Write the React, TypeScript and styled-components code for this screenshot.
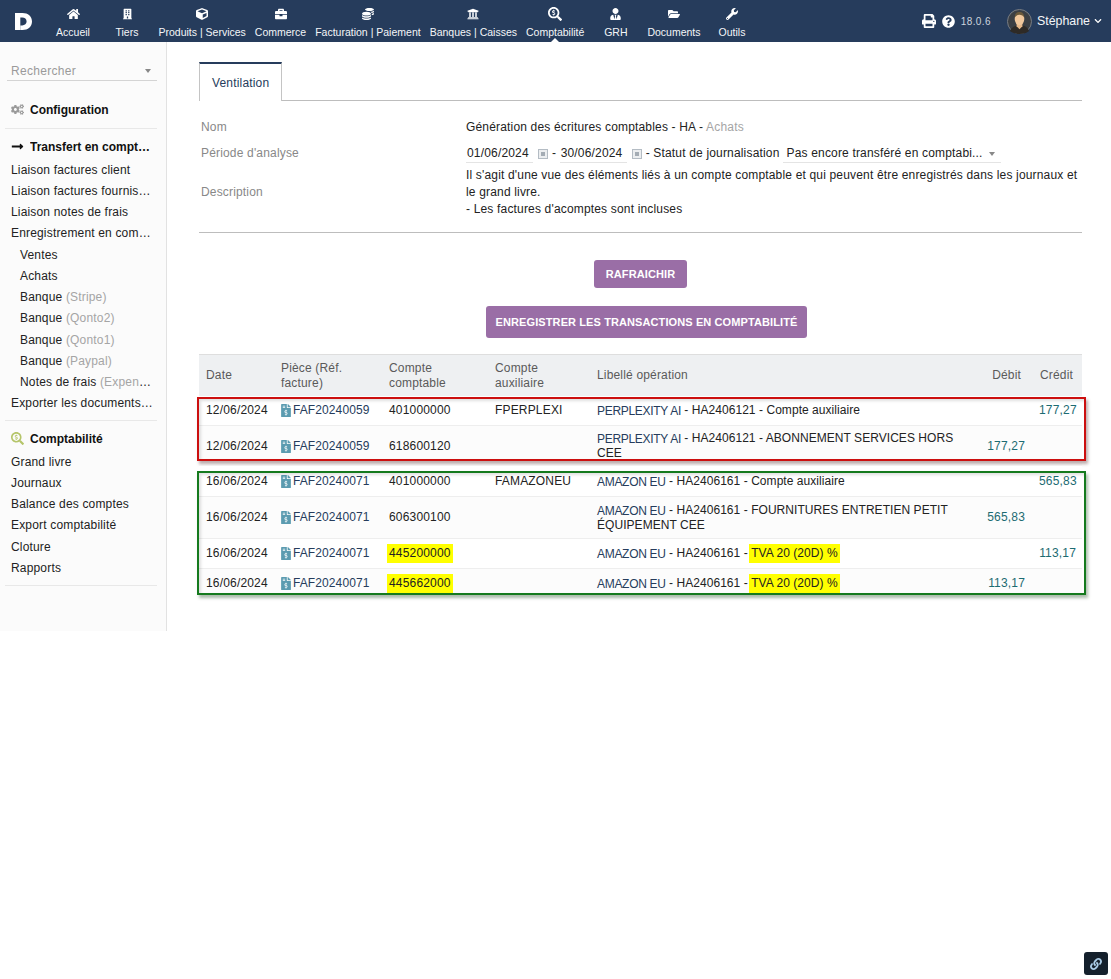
import React from 'react'
import styled, { createGlobalStyle } from 'styled-components'
import {
  FaBriefcase,
  FaBuilding,
  FaChevronDown,
  FaCoins,
  FaCogs,
  FaCube,
  FaFileInvoiceDollar,
  FaFolderOpen,
  FaHome,
  FaLink,
  FaLongArrowAltRight,
  FaPrint,
  FaQuestionCircle,
  FaSearchDollar,
  FaUniversity,
  FaUserTie,
  FaWrench,
} from 'react-icons/fa'

const NAVY = '#263c5c'
const COLUMNS = '75px 108px 106px 102px 1fr 52px 50px'

const GlobalStyle = createGlobalStyle`
  html, body {
    margin: 0;
    padding: 0;
    background: #fff;
    color: #222;
    font-family: "Liberation Sans", Arial, sans-serif;
    font-size: 12px;
    letter-spacing: 0.17px;
  }
`

const Page = styled.div`
  width: 1111px;
  min-height: 979px;
  display: flex;
  flex-direction: column;
`

const TopBar = styled.header`
  height: 42px;
  background: ${NAVY};
  display: flex;
  align-items: stretch;
  color: #f4f6f8;
  letter-spacing: 0;
`

const Logo = styled.svg`
  width: 17px;
  height: 17px;
  margin: 13px 14px 0 15px;
`

const Nav = styled.nav`
  display: flex;
  flex: 1;
`

const NavItem = styled.a<{ $active?: boolean }>`
  position: relative;
  min-width: 54px;
  box-sizing: border-box;
  padding: 0 4.5px;
  display: flex;
  flex-direction: column;
  align-items: center;
  font-size: 10.5px;
  line-height: 13px;
  white-space: nowrap;
  &::after {
    content: '';
    display: ${p => (p.$active ? 'block' : 'none')};
    position: absolute;
    left: 50%;
    bottom: 0;
    margin-left: -4px;
    border: 4px solid transparent;
    border-top: 0;
    border-bottom-color: #fff;
  }
`

const NavIcon = styled.span<{ $w: number; $h: number }>`
  height: 24px;
  padding-top: 2px;
  display: flex;
  align-items: center;
  svg {
    width: ${p => p.$w}px;
    height: ${p => p.$h}px;
    color: #fff;
  }
`

const Tools = styled.div`
  display: flex;
  align-items: center;
  padding-right: 9px;
  svg {
    color: #fff;
  }
`

const ToolIcon = styled.span<{ $size: number }>`
  display: flex;
  margin-right: 6px;
  svg {
    width: ${p => p.$size}px;
    height: ${p => p.$size}px;
  }
`

const Version = styled.span`
  font-size: 10px;
  letter-spacing: 0.4px;
  color: #cdd4de;
  margin-right: 16px;
`

const Avatar = styled.svg`
  width: 25px;
  height: 25px;
  margin-right: 5px;
`

const UserName = styled.span`
  font-size: 12.4px;
  margin-right: 4px;
`

const Layout = styled.div`
  display: flex;
  align-items: flex-start;
`

const Sidebar = styled.aside`
  width: 167px;
  height: 589px;
  box-sizing: border-box;
  flex: none;
  background: #fbfbfb;
  border-right: 1px solid #e2e2e2;
  padding: 19px 9px 0 5px;
`

const SearchSelect = styled.div`
  height: 19px;
  margin: 0 0 11px 2px;
  padding: 0 6px 0 4px;
  display: flex;
  align-items: center;
  justify-content: space-between;
  color: #9a9a9a;
  border-bottom: 1px solid #d4d4d4;
  letter-spacing: 0.3px;
`

const Caret = styled.span`
  width: 0;
  height: 0;
  border: 3.5px solid transparent;
  border-bottom: 0;
  border-top: 4px solid #888;
`

const MenuBlock = styled.div`
  border-bottom: 1px solid #e8e8e8;
  padding: 7px 0 5.5px;
`

const MenuTitle = styled.div`
  height: 21px;
  margin-bottom: 2.5px;
  padding-right: 6px;
  display: flex;
  align-items: center;
  font-weight: 700;
  color: #111;
  letter-spacing: 0;
  span {
    overflow: hidden;
    text-overflow: ellipsis;
    white-space: nowrap;
  }
`

const TitleIcon = styled.i<{ $color: string }>`
  flex: none;
  width: 25px;
  padding-left: 6px;
  box-sizing: border-box;
  display: flex;
  color: ${p => p.$color};
  svg {
    width: 13px;
    height: 13px;
  }
`

const MenuLink = styled.div<{ $sub?: boolean }>`
  height: 21.25px;
  line-height: 21px;
  padding: 0 1px 0 ${p => (p.$sub ? 15 : 6)}px;
  color: #222;
  overflow: hidden;
  white-space: nowrap;
  text-overflow: ellipsis;
`

const Muted = styled.span`
  color: #a5a5a5;
`

const Main = styled.main`
  flex: 1;
  min-width: 0;
  padding: 20px 29px 0 32px;
`

const TabBar = styled.div`
  height: 38px;
  border-bottom: 1px solid #bdbdbd;
  display: flex;
`

const Tab = styled.div`
  box-sizing: border-box;
  height: 39px;
  padding: 12px 12px 0 12px;
  border: 1px solid #c4c4c4;
  border-top: 2px solid ${NAVY};
  border-bottom: 0;
  background: #fff;
  color: ${NAVY};
`

const Info = styled.section`
  display: grid;
  grid-template-columns: 265px 1fr;
  padding: 18px 0 14px 2px;
  border-bottom: 1px solid #bdbdbd;
  margin-bottom: 27px;
  line-height: 17px;
`

const Label = styled.div<{ $gap?: number }>`
  display: flex;
  align-items: center;
  color: #888;
  padding-top: ${p => p.$gap ?? 0}px;
`

const Value = styled.div`
  color: #222;
`

const PeriodValue = styled.div`
  display: flex;
  align-items: center;
  height: 27px;
  padding-top: 4px;
  white-space: pre;
`

const DateField = styled.span`
  width: 67px;
  box-sizing: border-box;
  padding-left: 1px;
  border-bottom: 1px solid #e4e4e4;
`

const CalendarIcon = styled.svg`
  width: 10px;
  height: 10px;
  margin: 0 4px 0 5px;
`

const StatusSelect = styled.span`
  width: 218px;
  box-sizing: border-box;
  margin-left: 3px;
  padding: 1px 6px 0 4px;
  display: flex;
  align-items: center;
  justify-content: space-between;
  border-bottom: 1px solid #e4e4e4;
`

const Actions = styled.div`
  display: flex;
  flex-direction: column;
  align-items: center;
  gap: 18px;
  margin-bottom: 16px;
`

const Button = styled.button<{ $tall?: boolean }>`
  height: ${p => (p.$tall ? 32 : 28)}px;
  padding: 0 ${p => (p.$tall ? 10 : 11.5)}px;
  margin-left: ${p => (p.$tall ? 12 : 0)}px;
  border: 0;
  border-radius: 3px;
  background: #9a6ea6;
  color: #fff;
  font: 700 11px "Liberation Sans", Arial, sans-serif;
  letter-spacing: 0.1px;
`

const HeaderRow = styled.div`
  display: grid;
  grid-template-columns: ${COLUMNS};
  height: 42px;
  box-sizing: border-box;
  align-items: center;
  background: #eef0f2;
  border-top: 1px solid #dedede;
  color: #5a5a5a;
  line-height: 15px;
`

const HeaderCell = styled.div<{ $right?: number }>`
  padding: 0 ${p => p.$right ?? 7}px 0 7px;
  text-align: ${p => (p.$right ? 'right' : 'left')};
`

const Frame = styled.div<{ $color: string; $top: number; $bottom: number; $shadow: string }>`
  position: relative;
  &::after {
    content: '';
    position: absolute;
    left: -2px;
    right: -4px;
    top: ${p => p.$top}px;
    bottom: ${p => p.$bottom}px;
    border: 2px solid ${p => p.$color};
    box-shadow: 2px 3px 3px ${p => p.$shadow}, inset 2px 2px 3px rgba(0, 0, 0, 0.12);
    pointer-events: none;
  }
`

const Row = styled.div<{ $height: number; $even?: boolean }>`
  display: grid;
  grid-template-columns: ${COLUMNS};
  height: ${p => p.$height}px;
  box-sizing: border-box;
  align-items: center;
  background: ${p => (p.$even ? '#fcfcfc' : '#fff')};
  border-bottom: 1px solid #eeeeee;
  line-height: 15px;
  &:last-child {
    border-bottom: 0;
  }
`

const Cell = styled.div<{ $right?: number }>`
  padding: 0 ${p => p.$right ?? 7}px 0 7px;
  text-align: ${p => (p.$right ? 'right' : 'left')};
`

const WordingCell = styled(Cell)`
  letter-spacing: 0.05px;
`

const RefLink = styled.span`
  display: flex;
  align-items: center;
  color: ${NAVY};
  letter-spacing: 0.1px;
  svg {
    flex: none;
    width: 10px;
    height: 13px;
    margin-right: 2px;
    color: #5b9bb0;
  }
`

const Party = styled.span`
  position: relative;
  top: 1px;
  color: ${NAVY};
  letter-spacing: -0.3px;
`

const Amount = styled.span`
  color: #1c6b72;
`

const Marked = styled.mark`
  background: #ffff00;
  color: #222;
  padding: 2px 2px 3px;
  margin: 0 -2px;
`

const CornerButton = styled.div`
  position: fixed;
  right: 3px;
  bottom: 4px;
  width: 24px;
  height: 23px;
  border-radius: 3px;
  background: #14202c;
  color: #a9cbe6;
  display: flex;
  align-items: center;
  justify-content: center;
  svg {
    width: 12px;
    height: 12px;
  }
`

const NAV_ITEMS = [
  { label: 'Accueil', Icon: FaHome, w: 13, h: 12 },
  { label: 'Tiers', Icon: FaBuilding, w: 9, h: 12 },
  { label: 'Produits | Services', Icon: FaCube, w: 12, h: 12 },
  { label: 'Commerce', Icon: FaBriefcase, w: 12, h: 12 },
  { label: 'Facturation | Paiement', Icon: FaCoins, w: 12, h: 12 },
  { label: 'Banques | Caisses', Icon: FaUniversity, w: 12, h: 12 },
  { label: 'Comptabilité', Icon: FaSearchDollar, w: 14, h: 14, active: true },
  { label: 'GRH', Icon: FaUserTie, w: 11, h: 12 },
  { label: 'Documents', Icon: FaFolderOpen, w: 12, h: 12 },
  { label: 'Outils', Icon: FaWrench, w: 12, h: 12 },
]

const TRANSFER_LINKS: [string, string?, boolean?][] = [
  ['Liaison factures client'],
  ['Liaison factures fournisseurs'],
  ['Liaison notes de frais'],
  ['Enregistrement en comptabilité'],
  ['Ventes', undefined, true],
  ['Achats', undefined, true],
  ['Banque', '(Stripe)', true],
  ['Banque', '(Qonto2)', true],
  ['Banque', '(Qonto1)', true],
  ['Banque', '(Paypal)', true],
  ['Notes de frais', '(Expense report)', true],
  ['Exporter les documents sources'],
]

const ACCOUNTING_LINKS = ['Grand livre', 'Journaux', 'Balance des comptes', 'Export comptabilité', 'Cloture', 'Rapports']

interface Entry {
  date: string
  ref: string
  account: string
  marked?: boolean
  aux?: string
  party: string
  code: string
  label: string
  vat?: boolean
  debit?: string
  credit?: string
  height: number
}

const RED_ENTRIES: Entry[] = [
  { date: '12/06/2024', ref: 'FAF20240059', account: '401000000', aux: 'FPERPLEXI', party: 'PERPLEXITY AI', code: 'HA2406121', label: 'Compte auxiliaire', credit: '177,27', height: 30 },
  { date: '12/06/2024', ref: 'FAF20240059', account: '618600120', party: 'PERPLEXITY AI', code: 'HA2406121', label: 'ABONNEMENT SERVICES HORS CEE', debit: '177,27', height: 40 },
]

const GREEN_ENTRIES: Entry[] = [
  { date: '16/06/2024', ref: 'FAF20240071', account: '401000000', aux: 'FAMAZONEU', party: 'AMAZON EU', code: 'HA2406161', label: 'Compte auxiliaire', credit: '565,83', height: 31 },
  { date: '16/06/2024', ref: 'FAF20240071', account: '606300100', party: 'AMAZON EU', code: 'HA2406161', label: 'FOURNITURES ENTRETIEN PETIT ÉQUIPEMENT CEE', debit: '565,83', height: 42 },
  { date: '16/06/2024', ref: 'FAF20240071', account: '445200000', marked: true, party: 'AMAZON EU', code: 'HA2406161', label: 'TVA 20 (20D) %', vat: true, credit: '113,17', height: 30 },
  { date: '16/06/2024', ref: 'FAF20240071', account: '445662000', marked: true, party: 'AMAZON EU', code: 'HA2406161', label: 'TVA 20 (20D) %', vat: true, debit: '113,17', height: 29 },
]

const Calendar = () => (
  <CalendarIcon viewBox='0 0 10 10'>
    <rect x='0.5' y='0.5' width='9' height='9' fill='#eceef0' stroke='#b4bcc4' />
    <rect x='3' y='3' width='4' height='4' fill='#a4acb4' />
  </CalendarIcon>
)

const EntryRow = ({ entry, even }: { entry: Entry; even: boolean }) => (
  <Row $height={entry.height} $even={even}>
    <Cell>{entry.date}</Cell>
    <Cell>
      <RefLink>
        <FaFileInvoiceDollar />
        {entry.ref}
      </RefLink>
    </Cell>
    <Cell>{entry.marked ? <Marked>{entry.account}</Marked> : entry.account}</Cell>
    <Cell>{entry.aux}</Cell>
    <WordingCell>
      <Party>{entry.party}</Party> - {entry.code} - {entry.vat ? <Marked>{entry.label}</Marked> : entry.label}
    </WordingCell>
    <Cell $right={7}>
      <Amount>{entry.debit}</Amount>
    </Cell>
    <Cell $right={6}>
      <Amount>{entry.credit}</Amount>
    </Cell>
  </Row>
)

const App = () => (
  <Page>
    <GlobalStyle />
    <TopBar>
      <Logo viewBox='0 0 17 17'>
        <path
          fill='#fff'
          d='M0 0h7.5C13 0 17 3.4 17 8.5S13 17 7.5 17H5.5v-4.6h1.7c2.600 0 4.400-1.600 4.400-3.900S9.800 4.600 7.200 4.600H5.300V17H0z'
        />
      </Logo>
      <Nav>
        {NAV_ITEMS.map(({ label, Icon, w, h, active }) => (
          <NavItem key={label} $active={active}>
            <NavIcon $w={w} $h={h}>
              <Icon />
            </NavIcon>
            {label}
          </NavItem>
        ))}
      </Nav>
      <Tools>
        <ToolIcon $size={14}>
          <FaPrint />
        </ToolIcon>
        <ToolIcon $size={13}>
          <FaQuestionCircle />
        </ToolIcon>
        <Version>18.0.6</Version>
        <Avatar viewBox='0 0 26 26'>
          <circle cx='13' cy='13' r='12.500' fill='#3b3f44' stroke='#7a7f85' />
          <path fill='#2e2a26' d='M3 23c2-5 6-6 10-6s8 1 10 6c-5 4-15 4-20 0z' />
          <path fill='#e6b88a' d='M10 14h6v4l-3 3-3-3z' />
          <ellipse cx='13' cy='10.500' rx='5' ry='6.500' fill='#f0c79c' />
          <path fill='#6b5a3c' d='M8 9c0-4 2-6 5-6s5 2 5 6c-1-2-3-3-5-3s-4 1-5 3z' />
        </Avatar>
        <UserName>Stéphane</UserName>
        <FaChevronDown size={8} />
      </Tools>
    </TopBar>
    <Layout>
      <Sidebar>
        <SearchSelect>
          Rechercher
          <Caret />
        </SearchSelect>
        <MenuBlock>
          <MenuTitle>
            <TitleIcon $color='#9a9a9a'>
              <FaCogs />
            </TitleIcon>
            <span>Configuration</span>
          </MenuTitle>
        </MenuBlock>
        <MenuBlock>
          <MenuTitle>
            <TitleIcon $color='#111'>
              <FaLongArrowAltRight />
            </TitleIcon>
            <span>Transfert en comptabilité</span>
          </MenuTitle>
          {TRANSFER_LINKS.map(([label, extra, sub]) => (
            <MenuLink key={label + (extra ?? '')} $sub={sub}>
              {label} {extra && <Muted>{extra}</Muted>}
            </MenuLink>
          ))}
        </MenuBlock>
        <MenuBlock>
          <MenuTitle>
            <TitleIcon $color='#b5c56a'>
              <FaSearchDollar />
            </TitleIcon>
            <span>Comptabilité</span>
          </MenuTitle>
          {ACCOUNTING_LINKS.map(label => (
            <MenuLink key={label}>{label}</MenuLink>
          ))}
        </MenuBlock>
      </Sidebar>
      <Main>
        <TabBar>
          <Tab>Ventilation</Tab>
        </TabBar>
        <Info>
          <Label>Nom</Label>
          <Value>
            Génération des écritures comptables - HA - <Muted>Achats</Muted>
          </Value>
          <Label $gap={4}>Période d'analyse</Label>
          <PeriodValue>
            <DateField>01/06/2024</DateField>
            <Calendar />
            {'- '}
            <DateField>30/06/2024</DateField>
            <Calendar />
            {'- Statut de journalisation'}
            <StatusSelect>
              Pas encore transféré en comptabi...
              <Caret />
            </StatusSelect>
          </PeriodValue>
          <Label>Description</Label>
          <Value>
            Il s'agit d'une vue des éléments liés à un compte comptable et qui peuvent être enregistrés dans les journaux et le grand livre.
            <br />- Les factures d'acomptes sont incluses
          </Value>
        </Info>
        <Actions>
          <Button>RAFRAICHIR</Button>
          <Button $tall>ENREGISTRER LES TRANSACTIONS EN COMPTABILITÉ</Button>
        </Actions>
        <HeaderRow>
          <HeaderCell>Date</HeaderCell>
          <HeaderCell>Pièce (Réf. facture)</HeaderCell>
          <HeaderCell>Compte comptable</HeaderCell>
          <HeaderCell>Compte auxiliaire</HeaderCell>
          <HeaderCell>Libellé opération</HeaderCell>
          <HeaderCell $right={11}>Débit</HeaderCell>
          <HeaderCell $right={9}>Crédit</HeaderCell>
        </HeaderRow>
        <Frame $color='#cc0f0f' $top={1} $bottom={5} $shadow='rgba(90, 50, 50, 0.4)'>
          {RED_ENTRIES.map((entry, index) => (
            <EntryRow key={entry.account} entry={entry} even={index % 2 === 1} />
          ))}
        </Frame>
        <Frame $color='#157a1e' $top={5} $bottom={3} $shadow='rgba(50, 90, 50, 0.4)'>
          {GREEN_ENTRIES.map((entry, index) => (
            <EntryRow key={entry.account} entry={entry} even={index % 2 === 1} />
          ))}
        </Frame>
      </Main>
    </Layout>
    <CornerButton>
      <FaLink />
    </CornerButton>
  </Page>
)

export default App
